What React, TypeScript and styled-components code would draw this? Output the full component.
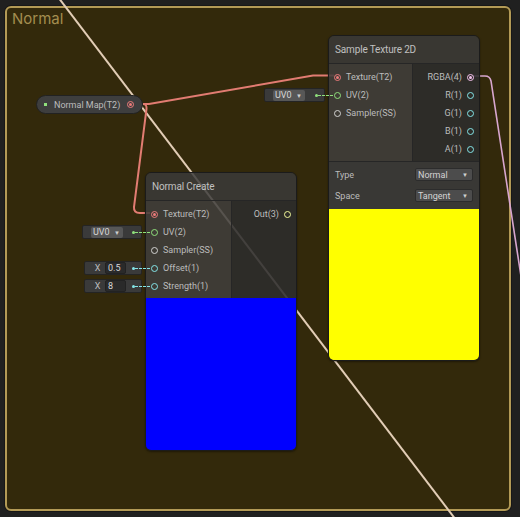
import React from 'react';
import styled, { createGlobalStyle } from 'styled-components';

const Global = createGlobalStyle`
  html, body { margin: 0; padding: 0; background: #202020; }
  body { font-family: Roboto, "Noto Sans", sans-serif; }
  * { box-sizing: border-box; }
`;

const Canvas = styled.div`
  position: relative;
  width: 520px;
  height: 517px;
  overflow: hidden;
  background: #202020;
`;

const Group = styled.div`
  position: absolute;
  left: 5px;
  top: 6px;
  width: 506px;
  height: 505px;
  border: 2px solid #b39a56;
  border-radius: 6px;
  background: #33290b;
  box-shadow: 0 0 0 1px #171717;
`;

const GroupTitle = styled.div`
  padding: 2px 0 0 5px;
  font-family: Inter, "Noto Sans", sans-serif;
  font-size: 15px;
  line-height: 18px;
  color: #a38d4f;
`;

const WireLayer = styled.svg`
  position: absolute;
  left: 0;
  top: 0;
  width: 520px;
  height: 517px;
  pointer-events: none;
`;

const Node = styled.div<{ $x: number; $y: number; $w: number }>`
  position: absolute;
  left: ${p => p.$x}px;
  top: ${p => p.$y}px;
  width: ${p => p.$w}px;
  border: 1px solid #1b1b1b;
  border-radius: 6px;
  display: flex;
  flex-direction: column;
  box-shadow: 0 1px 2px rgba(0, 0, 0, 0.4);
`;

const Header = styled.div`
  height: 28px;
  display: flex;
  align-items: center;
  padding-left: 6px;
  font-size: 10px;
  letter-spacing: -0.15px;
  color: #c0c0c0;
  background: rgba(58, 58, 58, 0.84);
  border-radius: 5px 5px 0 0;
  border-bottom: 1px solid #262626;
`;

const Ports = styled.div`
  display: flex;
`;

const InputCol = styled.div`
  flex: 1;
  padding: 4px 0 3px;
  background: rgba(64, 63, 61, 0.86);
`;

const OutputCol = styled.div<{ $w: number }>`
  width: ${p => p.$w}px;
  padding: 4px 0 3px;
  background: rgba(44, 44, 44, 0.88);
  border-left: 1px solid #262626;
`;

const Row = styled.div<{ $out?: boolean }>`
  position: relative;
  height: 18px;
  display: flex;
  align-items: center;
  gap: 5px;
  font-size: 9px;
  color: #bcbcbc;
  white-space: nowrap;
  justify-content: ${p => (p.$out ? 'flex-end' : 'flex-start')};
  padding: ${p => (p.$out ? '0 5px 0 0' : '0 0 0 5px')};
`;

const Ring = styled.span<{ $c: string; $on?: boolean }>`
  position: relative;
  flex: none;
  width: 7px;
  height: 7px;
  border-radius: 50%;
  border: 1.5px solid ${p => p.$c};
  &::after {
    content: '';
    display: ${p => (p.$on ? 'block' : 'none')};
    position: absolute;
    left: 50%;
    top: 50%;
    width: 3px;
    height: 3px;
    margin: -1.5px 0 0 -1.5px;
    border-radius: 50%;
    background: ${p => p.$c};
  }
`;

const Field = styled.div<{ $w: number }>`
  position: absolute;
  right: calc(100% + 4px);
  top: 2px;
  width: ${p => p.$w}px;
  height: 14px;
  display: flex;
  align-items: center;
  gap: 3px;
  padding: 0 6px 0 8px;
  background: #3a3a3a;
  border: 1px solid #242424;
  border-radius: 2px;
  font-size: 9px;
  color: #c8c8c8;
`;

const Mini = styled.div`
  height: 11px;
  width: 32px;
  display: flex;
  align-items: center;
  justify-content: space-between;
  padding: 0 3px 0 2px;
  background: #575757;
  border-radius: 2px;
  font-size: 9px;
  color: #d6d6d6;
`;

const Arrow = styled.span`
  font-size: 6px;
  color: #d0d0d0;
`;

const AxisLabel = styled.span`
  width: 10px;
  text-align: center;
  color: #bdbdbd;
`;

const ValueBox = styled.div`
  width: 23px;
  height: 12px;
  display: flex;
  align-items: center;
  padding-left: 2px;
  background: #2a2a2a;
  border: 1px solid #222;
  border-radius: 2px;
  color: #d8d8d8;
  font-size: 9px;
`;

const Spacer = styled.span`
  flex: 1;
`;

const Dot = styled.span<{ $c: string }>`
  position: relative;
  flex: none;
  width: 3px;
  height: 3px;
  border-radius: 50%;
  background: ${p => p.$c};
`;

const Connector = styled.span<{ $c: string }>`
  position: absolute;
  left: 3px;
  top: 1px;
  width: 15px;
  border-top: 1px dashed ${p => p.$c};
`;

const Props = styled.div`
  padding: 2px 6px 3px 6px;
  background: rgba(58, 58, 58, 0.9);
  border-top: 1px solid #262626;
`;

const PropRow = styled.div`
  height: 21px;
  display: flex;
  align-items: center;
  justify-content: space-between;
  font-size: 9px;
  color: #bcbcbc;
`;

const Dropdown = styled.div`
  width: 58px;
  height: 13px;
  display: flex;
  align-items: center;
  justify-content: space-between;
  padding: 0 4px 0 2px;
  background: #4c4c4c;
  border: 1px solid #2c2c2c;
  border-radius: 2px;
  font-size: 9px;
  color: #d4d4d4;
`;

const Preview = styled.div<{ $c: string; $h: number }>`
  height: ${p => p.$h}px;
  background: ${p => p.$c};
  border-radius: 0 0 5px 5px;
`;

const Pill = styled.div`
  position: absolute;
  left: 36px;
  top: 95px;
  width: 107px;
  height: 19px;
  display: flex;
  align-items: center;
  gap: 7px;
  padding: 0 12px 0 7px;
  background: #3e3e3e;
  border: 1px solid #222;
  border-radius: 10px;
  font-size: 9px;
  color: #bcbcbc;
  white-space: nowrap;
`;

const Square = styled.span`
  width: 3px;
  height: 3px;
  flex: none;
  background: #8fe07c;
`;

const PillText = styled.span`
  flex: 1;
`;

const C = {
  tex: '#ec7b7b',
  uv: '#8fe07c',
  ss: '#d2d2d2',
  v1: '#84e4e7',
  v3: '#f1f89a',
  v4: '#f6c2ee',
};

type FieldSpec =
  | { kind: 'uv'; w: number }
  | { kind: 'x'; w: number; value: string };

type InPort = { label: string; color: string; on?: boolean; field?: FieldSpec };
type OutPort = { label: string; color: string; on?: boolean };

function InputField({ spec, color }: { spec: FieldSpec; color: string }) {
  return (
    <Field $w={spec.w}>
      {spec.kind === 'uv' ? (
        <Mini>
          UV0<Arrow>▼</Arrow>
        </Mini>
      ) : (
        <>
          <AxisLabel>X</AxisLabel>
          <ValueBox>{spec.value}</ValueBox>
        </>
      )}
      <Spacer />
      <Dot $c={color}>
        <Connector $c={color} />
      </Dot>
    </Field>
  );
}

function PortList({ inputs, outputs, outW }: { inputs: InPort[]; outputs: OutPort[]; outW: number }) {
  return (
    <Ports>
      <InputCol>
        {inputs.map(p => (
          <Row key={p.label}>
            {p.field && <InputField spec={p.field} color={p.color} />}
            <Ring $c={p.color} $on={p.on} />
            {p.label}
          </Row>
        ))}
      </InputCol>
      <OutputCol $w={outW}>
        {outputs.map(p => (
          <Row key={p.label} $out>
            {p.label}
            <Ring $c={p.color} $on={p.on} />
          </Row>
        ))}
      </OutputCol>
    </Ports>
  );
}

export default function App() {
  return (
    <Canvas>
      <Global />
      <Group>
        <GroupTitle>Normal</GroupTitle>
      </Group>

      <WireLayer viewBox="0 0 520 517">
        <path d="M58,-3 L456,520" stroke="#e2cdb6" strokeWidth="2" fill="none" />
        <path d="M143,104 L149,104 L313,75.5 L334,75.5" stroke="#e27c72" strokeWidth="2" fill="none" />
        <path d="M143,104 Q147,104 146.5,109 L134,207 Q133.5,213 140,213 L150,213" stroke="#e27c72" strokeWidth="2" fill="none" />
        <path d="M473,76 L485,76 Q490,76 491,81 L540,400" stroke="#d8a6cf" strokeWidth="1.6" fill="none" />
      </WireLayer>

      <Pill>
        <Square />
        <PillText>Normal Map(T2)</PillText>
        <Ring $c={C.tex} $on />
      </Pill>

      <Node $x={328} $y={35} $w={152}>
        <Header>Sample Texture 2D</Header>
        <PortList
          outW={67}
          inputs={[
            { label: 'Texture(T2)', color: C.tex, on: true },
            { label: 'UV(2)', color: C.uv, field: { kind: 'uv', w: 61 } },
            { label: 'Sampler(SS)', color: C.ss },
          ]}
          outputs={[
            { label: 'RGBA(4)', color: C.v4, on: true },
            { label: 'R(1)', color: C.v1 },
            { label: 'G(1)', color: C.v1 },
            { label: 'B(1)', color: C.v1 },
            { label: 'A(1)', color: C.v1 },
          ]}
        />
        <Props>
          <PropRow>
            Type
            <Dropdown>
              Normal<Arrow>▼</Arrow>
            </Dropdown>
          </PropRow>
          <PropRow>
            Space
            <Dropdown>
              Tangent<Arrow>▼</Arrow>
            </Dropdown>
          </PropRow>
        </Props>
        <Preview $c="#ffff00" $h={151} />
      </Node>

      <Node $x={145} $y={172} $w={152}>
        <Header>Normal Create</Header>
        <PortList
          outW={65}
          inputs={[
            { label: 'Texture(T2)', color: C.tex, on: true },
            { label: 'UV(2)', color: C.uv, field: { kind: 'uv', w: 60 } },
            { label: 'Sampler(SS)', color: C.ss },
            { label: 'Offset(1)', color: C.v1, field: { kind: 'x', w: 58, value: '0.5' } },
            { label: 'Strength(1)', color: C.v1, field: { kind: 'x', w: 58, value: '8' } },
          ]}
          outputs={[{ label: 'Out(3)', color: C.v3 }]}
        />
        <Preview $c="#0000ff" $h={152} />
      </Node>
    </Canvas>
  );
}
